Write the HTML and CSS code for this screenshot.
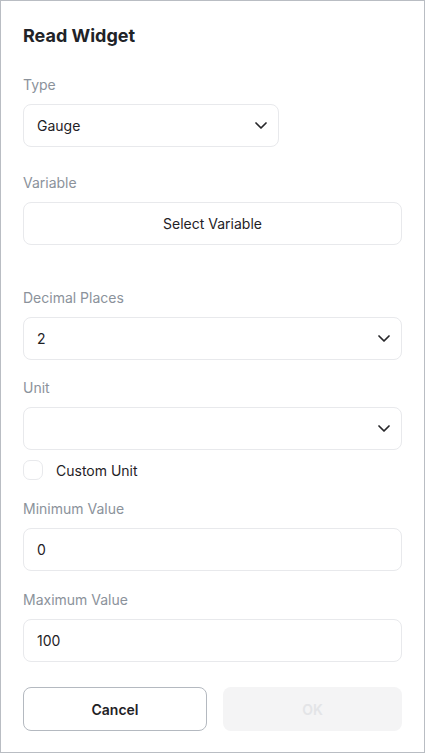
FILE: index.html
```html
<!DOCTYPE html>
<html lang="en">
<head>
<meta charset="utf-8">
<title>Read Widget</title>
<link rel="stylesheet" href="styles.css">
</head>
<body>
<div class="panel">
  <h1 class="title">Read Widget</h1>

  <div class="group g-type">
    <div class="label">Type</div>
    <div class="field select narrow">
      <span class="value">Gauge</span>
      <svg class="chev" viewBox="0 0 12 7" width="12" height="7"><path d="M1 1l5 5 5-5" fill="none" stroke="#27272a" stroke-width="1.7" stroke-linecap="round" stroke-linejoin="round"/></svg>
    </div>
  </div>

  <div class="group g-var">
    <div class="label">Variable</div>
    <div class="field button-field">Select Variable</div>
  </div>

  <div class="group g-dec">
    <div class="label">Decimal Places</div>
    <div class="field select">
      <span class="value">2</span>
      <svg class="chev" viewBox="0 0 12 7" width="12" height="7"><path d="M1 1l5 5 5-5" fill="none" stroke="#27272a" stroke-width="1.7" stroke-linecap="round" stroke-linejoin="round"/></svg>
    </div>
  </div>

  <div class="group g-unit">
    <div class="label">Unit</div>
    <div class="field select">
      <span class="value"></span>
      <svg class="chev" viewBox="0 0 12 7" width="12" height="7"><path d="M1 1l5 5 5-5" fill="none" stroke="#27272a" stroke-width="1.7" stroke-linecap="round" stroke-linejoin="round"/></svg>
    </div>
  </div>

  <div class="check-row">
    <span class="checkbox"></span>
    <span class="check-label">Custom Unit</span>
  </div>

  <div class="group g-min">
    <div class="label">Minimum Value</div>
    <div class="field input"><span class="value">0</span></div>
  </div>

  <div class="group g-max">
    <div class="label">Maximum Value</div>
    <div class="field input"><span class="value">100</span></div>
  </div>

  <div class="actions">
    <div class="btn btn-cancel">Cancel</div>
    <div class="btn btn-ok">OK</div>
  </div>
</div>
</body>
</html>
```

FILE: styles.css
```css
* { box-sizing: border-box; }

html, body {
  margin: 0;
  padding: 0;
  background: #ffffff;
}

body {
  font-family: Inter, "Noto Sans", "Liberation Sans", sans-serif;
  color: #1f2226;
  font-size: 14px;
}

.panel {
  width: 425px;
  height: 753px;
  border: 1px solid #b9bdc3;
  padding: 23px 22px 0 22px;
  display: flex;
  flex-direction: column;
  background: #fff;
}

.title {
  margin: 0;
  font-size: 18px;
  line-height: 24px;
  font-weight: 700;
  color: #212327;
}

.group {
  display: flex;
  flex-direction: column;
}

.g-type { margin-top: 27px; }
.g-var { margin-top: 26px; }
.g-dec { margin-top: 43px; }
.g-unit { margin-top: 18px; }
.g-min { margin-top: 19px; }
.g-max { margin-top: 19px; }

.label {
  font-size: 14px;
  line-height: 20px;
  color: #8b929b;
  margin-bottom: 9px;
}

.field {
  height: 43px;
  border: 1px solid #e8e9ec;
  border-radius: 8px;
  display: flex;
  align-items: center;
  padding: 0 11px 0 13px;
  font-size: 14px;
  color: #1f2226;
  background: #fff;
}

.field.narrow { width: 256px; }

.select { justify-content: space-between; }

.value { flex: 1; }

.chev { flex: none; display: block; }

.button-field {
  justify-content: center;
  font-weight: 400;
  padding: 0;
}

.check-row {
  margin-top: 10px;
  height: 20px;
  display: flex;
  align-items: center;
  gap: 13px;
}

.checkbox {
  width: 20px;
  height: 20px;
  border: 1px solid #e8e9ec;
  border-radius: 7px;
  background: #fff;
  flex: none;
}

.check-label {
  font-size: 14px;
  color: #1f2226;
  font-weight: 400;
}

.actions {
  margin-top: 25px;
  display: grid;
  grid-template-columns: 184px 1fr;
  gap: 16px;
}

.btn {
  height: 44px;
  border-radius: 8px;
  display: flex;
  align-items: center;
  justify-content: center;
  font-size: 14px;
  font-weight: 600;
}

.btn-cancel {
  border: 1px solid #b4b9c0;
  color: #1f2226;
  background: #fff;
}

.btn-ok {
  background: #f4f4f5;
  color: #e3e4e7;
}
```
